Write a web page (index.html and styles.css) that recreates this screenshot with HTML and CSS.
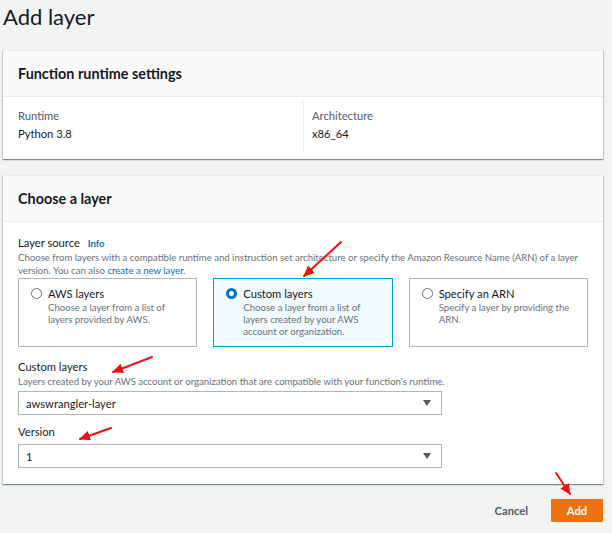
FILE: index.html
```html
<!DOCTYPE html>
<html>
<head>
<meta charset="utf-8">
<link rel="stylesheet" href="styles.css">
</head>
<body>
<div class="page">
  <h1 class="title">Add layer</h1>

  <section class="card">
    <div class="card-header">Function runtime settings</div>
    <div class="card-body kv">
      <div class="kv-col">
        <div class="kv-key">Runtime</div>
        <div class="kv-val">Python 3.8</div>
      </div>
      <div class="kv-col kv-col-2">
        <div class="kv-key">Architecture</div>
        <div class="kv-val">x86_64</div>
      </div>
    </div>
  </section>

  <section class="card card-2">
    <div class="card-header">Choose a layer</div>
    <div class="card-body form">
      <div class="label">Layer source <span class="info">Info</span></div>
      <div class="desc">Choose from layers with a compatible runtime and instruction set architecture or specify the Amazon Resource Name (ARN) of a layer version. You can also <span class="link">create a new layer</span>.</div>
      <div class="tiles">
        <div class="tile">
          <span class="radio"></span>
          <div class="tile-text">
            <div class="tile-title">AWS layers</div>
            <div class="tile-desc">Choose a layer from a list of layers provided by AWS.</div>
          </div>
        </div>
        <div class="tile tile-on">
          <span class="radio radio-on"></span>
          <div class="tile-text">
            <div class="tile-title">Custom layers</div>
            <div class="tile-desc">Choose a layer from a list of layers created by your AWS account or organization.</div>
          </div>
        </div>
        <div class="tile">
          <span class="radio"></span>
          <div class="tile-text">
            <div class="tile-title">Specify an ARN</div>
            <div class="tile-desc">Specify a layer by providing the ARN.</div>
          </div>
        </div>
      </div>

      <div class="label label-2">Custom layers</div>
      <div class="desc desc-1">Layers created by your AWS account or organization that are compatible with your function's runtime.</div>
      <div class="select select-1"><span>awswrangler-layer</span><span class="caret"></span></div>

      <div class="label label-3">Version</div>
      <div class="select select-2"><span>1</span><span class="caret"></span></div>
    </div>
  </section>

  <div class="actions">
    <span class="cancel">Cancel</span>
    <span class="add">Add</span>
  </div>

  <svg class="arrows" width="612" height="533" viewBox="0 0 612 533">
    <defs>
      <marker id="head" markerUnits="userSpaceOnUse" markerWidth="12" markerHeight="10" refX="10" refY="5" orient="auto">
        <path d="M0,0 L11,5 L0,10 Z" fill="#ee1111"/>
      </marker>
    </defs>
    <g stroke="#ee1111" stroke-width="2" fill="none" stroke-linecap="round">
      <line x1="341" y1="242" x2="304" y2="276" marker-end="url(#head)"/>
      <line x1="152" y1="357" x2="113" y2="372" marker-end="url(#head)"/>
      <line x1="111" y1="428" x2="80" y2="439" marker-end="url(#head)"/>
      <line x1="556" y1="473" x2="570" y2="494" marker-end="url(#head)"/>
    </g>
  </svg>
</div>
</body>
</html>
```

FILE: styles.css
```css
* { box-sizing: border-box; }
html, body { margin: 0; padding: 0; }
body {
  background: #f2f3f3;
  font-family: Lato, "Open Sans", "Liberation Sans", sans-serif;
  color: #16191f;
  width: 612px;
  height: 533px;
  overflow: hidden;
}
.page {
  position: relative;
  padding: 0 9px 0 3px;
  width: 612px;
  height: 533px;
}
.title {
  margin: 0 0 20px;
  padding-top: 4px;
  font-size: 22px;
  line-height: 26px;
  font-weight: 400;
  color: #16191f;
}
.card {
  width: 600px;
  background: #fff;
  box-shadow: 0 1px 1px 0 rgba(0, 28, 36, .3), 1px 1px 1px 0 rgba(0, 28, 36, .15), -1px 1px 1px 0 rgba(0, 28, 36, .15);
  border-top: 1px solid #eaeded;
}
.card-2 { margin-top: 16px; }
.card-header {
  height: 46px;
  display: flex;
  align-items: center;
  padding: 0 15px;
  background: #fafafa;
  border-bottom: 1px solid #eaeded;
  font-size: 14.4px;
  font-weight: 700;
}
.card-body { padding: 5px 15px 8px; }
.kv {
  display: grid;
  grid-template-columns: 1fr 1fr;
}
.kv-col {
  padding: 5px 0 8px;
  font-size: 11.2px;
  line-height: 18px;
}
.kv-col-2 {
  border-left: 1px solid #eaeded;
  padding-left: 8px;
}
.kv-key { color: #545b64; }
.kv-val { color: #16191f; }

.form { padding: 13px 15px 16px; }
.label {
  font-size: 11.2px;
  line-height: 15px;
  color: #16191f;
}
.info {
  font-size: 9.6px;
  font-weight: 700;
  color: #0073bb;
  margin-left: 5px;
}
.desc {
  font-size: 9.6px;
  line-height: 13px;
  color: #687078;
}
.link { color: #0073bb; }
.tiles {
  display: grid;
  grid-template-columns: 1fr 1fr 1fr;
  gap: 16px;
  margin-top: 1px;
}
.tile {
  height: 69px;
  border: 1px solid #aab7b8;
  background: #fff;
  display: flex;
  align-items: flex-start;
  padding: 8px 10px 8px 12px;
}
.tile-on {
  border-color: #00a1c9;
  background: #f1faff;
}
.radio {
  flex: none;
  width: 11px;
  height: 11px;
  border-radius: 50%;
  border: 1px solid #687078;
  background: #fff;
  margin-top: 1px;
  margin-right: 6px;
}
.radio-on {
  border: 3px solid #0073bb;
}
.tile-title {
  font-size: 11.2px;
  line-height: 13px;
  color: #16191f;
}
.tile-desc {
  margin-top: 2px;
  font-size: 9.6px;
  line-height: 12px;
  color: #687078;
}
.label-2 { margin-top: 12px; }
.desc-1 { margin-top: 1px; }
.select {
  width: 424px;
  height: 24px;
  border: 1px solid #aab7b8;
  background: #fff;
  display: flex;
  align-items: center;
  justify-content: space-between;
  padding: 0 10px 0 7px;
  font-size: 11.2px;
  color: #16191f;
}
.select-1 { margin-top: 3px; }
.label-3 { margin-top: 9px; }
.select-2 { margin-top: 5px; }
.caret {
  width: 0;
  height: 0;
  border-left: 4px solid transparent;
  border-right: 4px solid transparent;
  border-top: 6px solid #545b64;
}
.actions {
  width: 600px;
  margin-top: 15px;
  display: flex;
  justify-content: flex-end;
  align-items: center;
}
.cancel {
  font-size: 11.2px;
  font-weight: 700;
  color: #545b64;
  margin-right: 23px;
}
.add {
  width: 52px;
  height: 23px;
  background: #ec7211;
  color: #fff;
  font-size: 11.2px;
  font-weight: 700;
  display: flex;
  align-items: center;
  justify-content: center;
  border-radius: 1px;
}
.arrows {
  position: absolute;
  left: 0;
  top: 0;
  pointer-events: none;
}
```
